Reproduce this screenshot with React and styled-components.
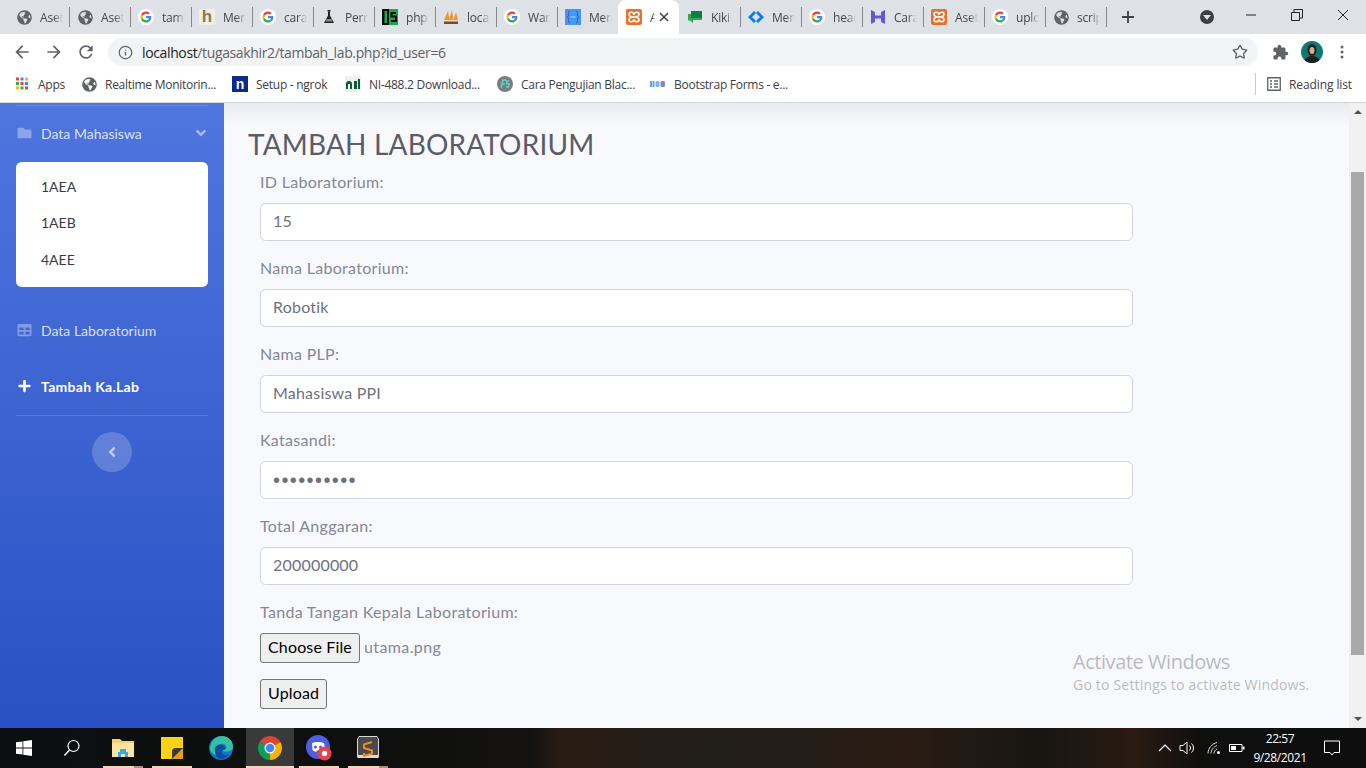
import React from 'react';
import styled, { createGlobalStyle } from 'styled-components';
import { FaFolder, FaTable, FaPlus, FaAngleDown, FaAngleLeft, FaGlobeAmericas } from 'react-icons/fa';
import { MdExtension } from 'react-icons/md';
import { Info, Star } from 'lucide-react';

const GlobalStyle = createGlobalStyle`
  html, body {
    margin: 0;
    height: 768px;
    overflow: hidden;
    font-family: 'Lato', 'Liberation Sans', sans-serif;
  }
  * { box-sizing: border-box; }
`;

const uiFont = `'Open Sans', 'Noto Sans', sans-serif`;

const Screen = styled.div`
  position: relative;
  width: 1366px;
  height: 768px;
  display: flex;
  flex-direction: column;
  overflow: hidden;
`;

/* browser chrome */
const TabStrip = styled.div`
  height: 34px;
  background: #dee1e6;
  display: flex;
  padding-left: 8px;
  align-items: stretch;
  font-family: ${uiFont};
`;

const Tab = styled.div`
  width: 61px;
  flex: none;
  display: flex;
  align-items: center;
  padding-left: 8px;
  position: relative;
  background: ${(p) => (p.$active ? '#fff' : 'transparent')};
  border-radius: ${(p) => (p.$active ? '8px 8px 0 0' : '0')};
  &::after {
    content: '';
    display: ${(p) => (p.$noSep ? 'none' : 'block')};
    position: absolute;
    right: -1px;
    top: 7px;
    height: 20px;
    width: 1px;
    background: #85888c;
  }
`;

const TabTitle = styled.span`
  margin-left: 8px;
  font-size: 12px;
  letter-spacing: -0.2px;
  color: #45474a;
  width: ${(p) => (p.$short ? 5 : 23)}px;
  white-space: nowrap;
  overflow: hidden;
  -webkit-mask-image: linear-gradient(to right, #000 60%, transparent);
  mask-image: linear-gradient(to right, #000 60%, transparent);
`;

const TabClose = styled.span`
  position: absolute;
  right: 8px;
  top: 10px;
  width: 14px;
  height: 14px;
  display: flex;
`;

const StripControls = styled.div`
  display: flex;
  align-items: center;
  flex: 1;
  position: relative;
`;

const NewTab = styled.div`
  margin-left: 14px;
  width: 16px;
  height: 16px;
  display: flex;
`;

const TabSearch = styled.div`
  margin-left: 64px;
  width: 14px;
  height: 14px;
  border-radius: 50%;
  background: #3c4043;
  display: flex;
  align-items: center;
  justify-content: center;
  &::after {
    content: '';
    border-left: 4px solid transparent;
    border-right: 4px solid transparent;
    border-top: 5px solid #dee1e6;
    margin-top: 1px;
  }
`;

const WindowBtns = styled.div`
  display: flex;
  margin-left: auto;
  height: 30px;
  align-self: flex-start;
`;

const WindowBtn = styled.div`
  width: 46px;
  height: 30px;
  display: flex;
  align-items: center;
  justify-content: center;
`;

const Toolbar = styled.div`
  height: 32px;
  background: #fff;
  display: flex;
  align-items: flex-end;
  font-family: ${uiFont};
`;

const NavBtn = styled.div`
  width: ${(p) => p.$w || 32}px;
  height: 28px;
  flex: none;
  display: flex;
  align-items: center;
  justify-content: center;
  margin-left: ${(p) => p.$ml || 0}px;
`;

const Omnibox = styled.div`
  margin-left: 6px;
  width: 1150px;
  height: 28px;
  border-radius: 14px;
  background: #f1f3f4;
  display: flex;
  align-items: center;
  padding: 0 10px;
  color: #5f6368;
`;

const Url = styled.div`
  margin-left: 9px;
  font-size: 14px;
  color: #5f6368;
  flex: 1;
  letter-spacing: -0.37px;
  b { font-weight: 400; color: #202124; }
`;

const Avatar = styled.div`
  width: 22px;
  height: 22px;
  flex: none;
  border-radius: 50%;
  overflow: hidden;
  margin: 0 5px 3px;
`;

const Bookmarks = styled.div`
  height: 37px;
  background: #fff;
  border-bottom: 1px solid #d2d3d5;
  display: flex;
  align-items: flex-start;
  padding: 10px 0 0 14px;
  font-family: ${uiFont};
  font-size: 12px;
  letter-spacing: -0.27px;
  color: #3c4043;
`;

const Bookmark = styled.div`
  width: ${(p) => p.$w}px;
  flex: none;
  height: 16px;
  display: flex;
  align-items: center;
  gap: 8px;
  white-space: nowrap;
`;

const ReadingList = styled.div`
  margin-left: auto;
  width: 111px;
  height: 22px;
  margin-top: -3px;
  border-left: 1px solid #c6c8ca;
  padding-left: 11px;
  display: flex;
  align-items: center;
  gap: 8px;
  white-space: nowrap;
  letter-spacing: -0.1px;
`;

/* page */
const Body = styled.div`
  flex: 1;
  min-height: 0;
  display: flex;
`;

const Sidebar = styled.aside`
  width: 224px;
  flex: none;
  background: linear-gradient(180deg, #4f75df 0%, #2a51c3 100%);
  padding: 2px 16px 0;
  font-size: 14px;
  display: flex;
  flex-direction: column;
`;

const Divider = styled.hr`
  width: 100%;
  margin: 0;
  border: 0;
  border-top: 1px solid rgba(255, 255, 255, 0.15);
`;

const NavItem = styled.div`
  height: 56px;
  padding-bottom: 2px;
  display: flex;
  align-items: center;
  gap: 8px;
  color: ${(p) => (p.$on ? '#fff' : 'rgba(255,255,255,.8)')};
  font-weight: ${(p) => (p.$on ? 700 : 400)};
  letter-spacing: ${(p) => (p.$on ? '0.3px' : '0')};
  svg { flex: none; font-size: 14px; width: 17px; color: ${(p) => (p.$on ? '#fff' : 'rgba(255,255,255,.35)')}; }
`;

const NavArrow = styled.span`
  margin-left: auto;
  display: flex;
  margin-right: -1px;
  svg { font-size: 16px; width: 16px; color: rgba(255, 255, 255, 0.5); }
`;

const SubMenu = styled.div`
  background: #fff;
  border-radius: 5.6px;
  height: 125px;
  padding: 7px 0;
  margin-bottom: 16px;
`;

const SubLink = styled.div`
  height: 36.6px;
  display: flex;
  align-items: center;
  padding: 0 0 2px 25px;
  color: #3a3b45;
  font-size: 14px;
`;

const Toggle = styled.div`
  width: 40px;
  height: 40px;
  border-radius: 50%;
  background: rgba(255, 255, 255, 0.2);
  margin: 16px auto 0;
  display: flex;
  align-items: center;
  justify-content: center;
  color: rgba(255, 255, 255, 0.6);
  font-size: 16px;
`;

const Content = styled.main`
  flex: 1;
  background: #f8f9fc;
  padding: 24px 0 0 24px;
  position: relative;
  color: #858796;
  &::before {
    content: '';
    position: absolute;
    left: 0;
    right: 0;
    top: 0;
    height: 22px;
    background: linear-gradient(180deg, #e9eaed, rgba(248, 249, 252, 0));
  }
`;

const Title = styled.h1`
  margin: 0 0 10px;
  font-size: 28px;
  font-weight: 400;
  line-height: 34px;
  letter-spacing: 0.16px;
  color: #5a5c69;
  position: relative;
`;

const Form = styled.div`
  width: 873px;
  margin-left: 12px;
`;

const Field = styled.div`
  margin-bottom: 16px;
`;

const Label = styled.label`
  display: block;
  font-size: 16px;
  height: 24px;
  line-height: 22px;
  letter-spacing: 0.3px;
  margin-bottom: 8px;
`;

const TextInput = styled.div`
  height: 38px;
  background: #fff;
  border: 1px solid #d1d3e2;
  border-radius: 5.6px;
  padding: 0 12px 3px;
  display: flex;
  align-items: center;
  font-size: 16px;
  letter-spacing: 0.2px;
  color: #6e707e;
`;

const Dots = styled.span`
  letter-spacing: 1.4px;
  font-family: 'Liberation Sans', sans-serif;
  font-size: 20px;
  line-height: 20px;
  padding-top: 3px;
`;

const FileRow = styled.div`
  display: flex;
  align-items: center;
  gap: 4px;
  margin-bottom: 16px;
  font-size: 16px;
`;

const FileName = styled.span`
  letter-spacing: 0.4px;
  padding-bottom: 3px;
`;

const NativeButton = styled.button`
  height: 30px;
  padding: 0 7px 3px;
  background: #efefef;
  border: 1px solid #767676;
  border-radius: 3px;
  font: inherit;
  font-size: 16px;
  letter-spacing: 0.15px;
  color: #000;
`;

const Scrollbar = styled.div`
  width: 17px;
  flex: none;
  background: #f1f1f1;
  display: flex;
  flex-direction: column;
  align-items: center;
  justify-content: space-between;
  position: relative;
  padding: 7px 0;
`;

const ScrollArrow = styled.div`
  border-left: 4px solid transparent;
  border-right: 4px solid transparent;
  ${(p) => (p.$up ? 'border-bottom: 4px solid #505050;' : 'border-top: 4px solid #505050;')}
`;

const ScrollThumb = styled.div`
  position: absolute;
  left: 2px;
  right: 2px;
  top: 69px;
  height: 483px;
  background: #a8a8a8;
`;

const Watermark = styled.div`
  position: absolute;
  left: 1073px;
  top: 649px;
  font-family: ${uiFont};
  color: rgba(120, 122, 130, 0.5);
  font-size: 14px;
  line-height: 22px;
  letter-spacing: 0.2px;
  strong { display: block; font-weight: 400; font-size: 20px; line-height: 25px; letter-spacing: -0.45px; }
`;

/* taskbar */
const Taskbar = styled.footer`
  height: 40px;
  flex: none;
  display: flex;
  align-items: stretch;
  background: linear-gradient(90deg, #0c0f10 0%, #0f0f0e 30%, #141311 39%, #2a1c14 41%, #211e1a 52%, #2a1c14 66%, #181612 76%, #2a1a12 83%, #0f0f0e 88%, #0e0e0e 100%);
  font-family: ${uiFont};
  color: #fff;
`;

const TaskSlot = styled.div`
  width: 48px;
  flex: none;
  display: flex;
  align-items: center;
  justify-content: center;
  position: relative;
  background: ${(p) => (p.$active ? '#3a3a3a' : 'transparent')};
  margin-right: ${(p) => p.$mr || 0}px;
  ${(p) =>
    p.$run &&
    `&::after {
      content: '';
      position: absolute;
      bottom: 0;
      left: ${p.$active ? 0 : 4}px;
      right: ${p.$active ? 0 : 4}px;
      height: 2px;
      background: ${p.$split ? 'linear-gradient(90deg, #f9d3b8 78%, #a8917f 78%)' : '#f9d3b8'};
    }`}
`;

const Tray = styled.div`
  margin-left: auto;
  display: flex;
  align-items: center;
`;

const TrayIcon = styled.div`
  width: ${(p) => p.$w}px;
  margin-right: ${(p) => p.$mr || 0}px;
  display: flex;
  justify-content: center;
`;

const Clock = styled.div`
  width: 62px;
  text-align: center;
  font-size: 12px;
  line-height: 19px;
  margin-left: 2px;
  letter-spacing: -0.4px;
`;

/* favicons and logos */
const Glyph = styled.svg`
  flex: none;
  display: block;
`;

const GoogleIcon = () => (
  <Glyph width="16" height="16" viewBox="0 0 48 48">
    <circle cx="24" cy="24" r="24" fill="#fff" />
    <g transform="translate(7.5 7.5) scale(.69)">
      <path fill="#EA4335" d="M24 9.5c3.5 0 6.7 1.3 9.1 3.5l6.8-6.8C35.8 2.4 30.2 0 24 0 14.6 0 6.5 5.4 2.6 13.2l7.9 6.2C12.4 13.7 17.7 9.5 24 9.5z" />
      <path fill="#4285F4" d="M46.9 24.5c0-1.6-.1-3.1-.4-4.5H24v9h12.9c-.6 3-2.2 5.5-4.7 7.2l7.7 6c4.5-4.2 7-10.3 7-17.7z" />
      <path fill="#FBBC05" d="M10.5 28.6c-.5-1.4-.8-3-.8-4.6s.3-3.2.8-4.6l-7.9-6.2C.9 16.5 0 20.1 0 24s.9 7.5 2.6 10.8l7.9-6.2z" />
      <path fill="#34A853" d="M24 48c6.5 0 11.9-2.1 15.9-5.8l-7.7-6c-2.2 1.4-4.9 2.3-8.2 2.3-6.3 0-11.6-4.2-13.5-9.9l-7.9 6.2C6.5 42.6 14.6 48 24 48z" />
    </g>
  </Glyph>
);

const GlobeGlyph = styled(FaGlobeAmericas)`
  flex: none;
  margin: 0 0.5px;
  color: #5f6368;
  font-size: 15px;
`;

const GlobeIcon = () => <GlobeGlyph />;

const SquareLetter = styled.span`
  width: 16px;
  height: 16px;
  flex: none;
  display: flex;
  align-items: center;
  justify-content: center;
  font-family: 'Liberation Sans', sans-serif;
  font-weight: 700;
  font-size: ${(p) => p.$size || 14}px;
  background: ${(p) => p.$bg};
  color: ${(p) => p.$fg};
`;

const XamppIcon = () => (
  <Glyph width="16" height="16" viewBox="0 0 16 16">
    <rect width="16" height="16" rx="2" fill="#e8702a" />
    <path d="M3 5.5C3 2.5 6.5 2.5 8 5 9.5 2.5 13 2.5 13 5.5 13 7 11.5 7.5 10.5 8 11.5 8.5 13 9 13 10.5 13 13.5 9.5 13.5 8 11 6.5 13.5 3 13.5 3 10.5 3 9 4.5 8.5 5.5 8 4.5 7.5 3 7 3 5.5z" fill="none" stroke="#fff" strokeWidth="1.6" />
    <path d="M6 8h4" stroke="#fff" strokeWidth="1.6" />
  </Glyph>
);

const FlaskIcon = () => (
  <Glyph width="16" height="16" viewBox="0 0 16 16">
    <rect x="6.5" y="1" width="3" height="1.5" fill="#222" />
    <path d="M7 2.5h2v4l4 7.5H3l4-7.5z" fill="#222" />
    <path d="M5.5 10h5l1 2.5h-7z" fill="#8a8a8a" />
  </Glyph>
);

const IsIcon = () => (
  <Glyph width="16" height="16" viewBox="0 0 16 16">
    <rect width="7" height="16" fill="#0c0c0c" />
    <rect x="7" width="9" height="16" fill="#1ea64a" />
    <rect x="2.5" y="2" width="2.5" height="12" fill="#1ea64a" />
    <path d="M14 4H9.5v3.5H14V12H9" fill="none" stroke="#0c0c0c" strokeWidth="2" />
  </Glyph>
);

const PmaIcon = () => (
  <Glyph width="16" height="16" viewBox="0 0 16 16">
    <path d="M1 11 5 2l1.5 9zM6 11l3-10 1.5 10zM10.500 11 13 3l2 8z" fill="#f0962e" />
    <path d="M1 12.5h14V15H1z" fill="#7a4a20" />
  </Glyph>
);

const BracesIcon = () => (
  <Glyph width="16" height="16" viewBox="0 0 16 16">
    <rect width="16" height="16" fill="#3d9cf0" />
    <path d="M5 2C3 2 3.5 4 3.5 6S2 8 2 8s1.5 0 1.5 2S3 14 5 14M11 2c2 0 1.5 2 1.5 4S14 8 14 8s-1.5 0-1.5 2 .5 4-1.5 4" fill="none" stroke="#7a3bb0" />
    <path d="M5.5 8h5" stroke="#a9d3f7" />
  </Glyph>
);

const ChatIcon = () => (
  <Glyph width="16" height="16" viewBox="0 0 16 16">
    <path d="M4 2h11v9H6v3l-3-2.5H1V5h3z" fill="#34a853" />
    <path d="M4 2h11v7H4z" fill="#0b8043" />
  </Glyph>
);

const DiamondIcon = () => (
  <Glyph width="16" height="16" viewBox="0 0 16 16">
    <path d="M6 2 0 8l6 6 2-2-4-4 4-4zM10 2 8 4l4 4-4 4 2 2 6-6z" fill="#0a7cf0" />
  </Glyph>
);

const PurpleHIcon = () => (
  <Glyph width="16" height="16" viewBox="0 0 16 16">
    <path d="M1 1l4 2v3.5h6V3l4-2v14l-4-2V9.5H5V13l-4 2z" fill="#6a55d8" />
  </Glyph>
);

const NgrokIcon = () => <SquareLetter $bg="#0a2a8c" $fg="#fff" $size={14}>n</SquareLetter>;

const HIcon = () => <SquareLetter $bg="#f1eee2" $fg="#8a7a58" $size={17}>h</SquareLetter>;

const NiIcon = () => (
  <Glyph width="16" height="16" viewBox="0 0 16 16">
    <rect width="16" height="16" fill="#eef2ee" />
    <path d="M1 13V8a3 3 0 0 1 6 0v5H5V8H3v5zM9 5h3v8H9z" fill="#0d5c36" />
    <path d="M13 3h2v10h-2z" fill="#0d5c36" />
  </Glyph>
);

const FsIcon = () => (
  <Glyph width="16" height="16" viewBox="0 0 16 16">
    <circle cx="8" cy="8" r="8" fill="#7a7f7c" />
    <path d="M4 12 6 4h3M5 8h3M12 5H9.5l.5 3h2l-.5 3H9" fill="none" stroke="#5fd3c8" strokeWidth="1.5" />
  </Glyph>
);

const MdbIcon = () => (
  <Glyph width="16" height="16" viewBox="0 0 16 16">
    <rect x="0" y="5" width="2" height="6" fill="#59a9e0" />
    <rect x="2.5" y="5" width="2" height="6" fill="#59a9e0" />
    <rect x="5.5" y="5" width="4" height="6" rx="1.5" fill="#7ab7e2" />
    <rect x="10.5" y="5" width="4.5" height="6" rx="1.5" fill="#8e7fd0" />
  </Glyph>
);

const AppsIcon = () => {
  const colors = ['#ea4335', '#4285f4', '#fbbc05', '#34a853', '#ea4335', '#4285f4', '#fbbc05', '#34a853', '#ea4335'];
  return (
    <Glyph width="16" height="16" viewBox="0 0 16 16">
      {colors.map((c, i) => (
        <rect key={i} x={2 + (i % 3) * 4.5} y={1.5 + Math.floor(i / 3) * 4.5} width="3" height="3" fill={c} />
      ))}
    </Glyph>
  );
};

const tabs = [
  [GlobeIcon, 'Aset'],
  [GlobeIcon, 'Aset'],
  [GoogleIcon, 'tamb'],
  [HIcon, 'Men'],
  [GoogleIcon, 'cara'],
  [FlaskIcon, 'Perr'],
  [IsIcon, 'php'],
  [PmaIcon, 'loca'],
  [GoogleIcon, 'War'],
  [BracesIcon, 'Men'],
  [XamppIcon, 'A', true],
  [ChatIcon, 'Kiki'],
  [DiamondIcon, 'Men'],
  [GoogleIcon, 'head'],
  [PurpleHIcon, 'Cara'],
  [XamppIcon, 'Aset'],
  [GoogleIcon, 'uplo'],
  [GlobeIcon, 'scrip'],
];

const bookmarks = [
  [AppsIcon, 'Apps', 67],
  [GlobeIcon, 'Realtime Monitorin...', 151],
  [NgrokIcon, 'Setup - ngrok', 113],
  [NiIcon, 'NI-488.2 Download...', 152],
  [FsIcon, 'Cara Pengujian Blac...', 153],
  [MdbIcon, 'Bootstrap Forms - e...', 200],
];

const fields = [
  ['ID Laboratorium:', '15'],
  ['Nama Laboratorium:', 'Robotik'],
  ['Nama PLP:', 'Mahasiswa PPI'],
  ['Katasandi:', null],
  ['Total Anggaran:', '200000000'],
];

const MaterialPath = ({ d, size = 20, color = '#5f6368' }) => (
  <Glyph width={size} height={size} viewBox="0 0 24 24">
    <path d={d} fill={color} />
  </Glyph>
);

const App = () => (
  <Screen>
    <GlobalStyle />
    <TabStrip>
      {tabs.map(([Icon, title, active], i) => (
        <Tab key={i} $active={active} $noSep={active || i === 9}>
          <Icon />
          <TabTitle $short={active}>{title}</TabTitle>
          {active && (
            <TabClose>
              <Glyph width="14" height="14" viewBox="0 0 14 14">
                <path d="M3 3l8 8M11 3l-8 8" stroke="#3c4043" strokeWidth="1.5" />
              </Glyph>
            </TabClose>
          )}
        </Tab>
      ))}
      <StripControls>
        <NewTab>
          <Glyph width="16" height="16" viewBox="0 0 16 16">
            <path d="M8 2v12M2 8h12" stroke="#3c4043" strokeWidth="1.8" />
          </Glyph>
        </NewTab>
        <TabSearch />
        <WindowBtns>
          <WindowBtn>
            <Glyph width="12" height="12" viewBox="0 0 12 12"><path d="M1 6h10" stroke="#222" /></Glyph>
          </WindowBtn>
          <WindowBtn>
            <Glyph width="12" height="12" viewBox="0 0 12 12">
              <path d="M.5 3.5h8v8h-8zM3 3.5V.5h8.5V9h-3" fill="none" stroke="#222" />
            </Glyph>
          </WindowBtn>
          <WindowBtn>
            <Glyph width="12" height="12" viewBox="0 0 12 12"><path d="M1 1l10 10M11 1L1 11" stroke="#222" /></Glyph>
          </WindowBtn>
        </WindowBtns>
      </StripControls>
    </TabStrip>

    <Toolbar>
      <NavBtn $ml={6}><MaterialPath d="M20 11H7.83l5.59-5.59L12 4l-8 8 8 8 1.41-1.41L7.83 13H20v-2z" /></NavBtn>
      <NavBtn><MaterialPath d="M4 11h12.17l-5.59-5.59L12 4l8 8-8 8-1.41-1.41L16.17 13H4v-2z" /></NavBtn>
      <NavBtn><MaterialPath d="M17.65 6.35A7.96 7.96 0 0 0 12 4c-4.42 0-7.99 3.58-7.99 8s3.57 8 7.99 8c3.73 0 6.84-2.55 7.73-6h-2.08A5.99 5.99 0 0 1 12 18c-3.31 0-6-2.69-6-6s2.69-6 6-6c1.66 0 3.14.69 4.22 1.78L13 11h7V4l-2.35 2.35z" /></NavBtn>
      <Omnibox>
        <Info size={15} strokeWidth={2} />
        <Url><b>localhost</b>/tugasakhir2/tambah_lab.php?id_user=6</Url>
        <Star size={16} strokeWidth={2} />
      </Omnibox>
      <NavBtn $ml={6}><MdExtension size={17} color="#5f6368" /></NavBtn>
      <Avatar>
        <Glyph width="22" height="22" viewBox="0 0 22 22">
          <rect width="22" height="22" fill="#0c7a72" />
          <path d="M3 22c0-5 4-7 8-7s8 2 8 7z" fill="#1d1d1f" />
          <ellipse cx="11" cy="9" rx="4.5" ry="6" fill="#1d1d1f" />
          <ellipse cx="11" cy="9.5" rx="2.5" ry="3.5" fill="#e3a97f" />
        </Glyph>
      </Avatar>
      <NavBtn $w={28}>
        <Glyph width="16" height="16" viewBox="0 0 16 16">
          <circle cx="8" cy="3" r="1.5" fill="#5f6368" />
          <circle cx="8" cy="8" r="1.5" fill="#5f6368" />
          <circle cx="8" cy="13" r="1.5" fill="#5f6368" />
        </Glyph>
      </NavBtn>
    </Toolbar>

    <Bookmarks>
      {bookmarks.map(([Icon, label, w]) => (
        <Bookmark key={label} $w={w}>
          <Icon />
          <span>{label}</span>
        </Bookmark>
      ))}
      <ReadingList>
        <Glyph width="14" height="14" viewBox="0 0 14 14">
          <path d="M.75.75h12.5v12.5H.75zM3 4h2M7 4h4M3 7h2M7 7h4M3 10h2M7 10h4" fill="none" stroke="#5f6368" strokeWidth="1.3" />
        </Glyph>
        <span>Reading list</span>
      </ReadingList>
    </Bookmarks>

    <Body>
      <Sidebar>
        <Divider />
        <NavItem>
          <FaFolder />
          <span>Data Mahasiswa</span>
          <NavArrow><FaAngleDown /></NavArrow>
        </NavItem>
        <SubMenu>
          <SubLink>1AEA</SubLink>
          <SubLink>1AEB</SubLink>
          <SubLink>4AEE</SubLink>
        </SubMenu>
        <NavItem><FaTable /><span>Data Laboratorium</span></NavItem>
        <NavItem $on><FaPlus /><span>Tambah Ka.Lab</span></NavItem>
        <Divider />
        <Toggle><FaAngleLeft /></Toggle>
      </Sidebar>

      <Content>
        <Title>TAMBAH LABORATORIUM</Title>
        <Form>
          {fields.map(([label, value]) => (
            <Field key={label}>
              <Label>{label}</Label>
              <TextInput>{value === null ? <Dots>••••••••••</Dots> : value}</TextInput>
            </Field>
          ))}
          <Label>Tanda Tangan Kepala Laboratorium:</Label>
          <FileRow>
            <NativeButton type="button">Choose File</NativeButton>
            <FileName>utama.png</FileName>
          </FileRow>
          <NativeButton type="button">Upload</NativeButton>
        </Form>
      </Content>

      <Scrollbar>
        <ScrollArrow $up />
        <ScrollThumb />
        <ScrollArrow />
      </Scrollbar>
    </Body>

    <Taskbar>
      <TaskSlot>
        <Glyph width="16" height="16" viewBox="0 0 16 16">
          <path d="M0 2.3 6.5 1.4v6.2H0zM7.3 1.3 16 0v7.6H7.3zM0 8.4h6.5v6.2L0 13.7zM7.3 8.4H16V16l-8.7-1.3z" fill="#fff" />
        </Glyph>
      </TaskSlot>
      <TaskSlot $mr={3}>
        <Glyph width="18" height="18" viewBox="0 0 18 18">
          <circle cx="10.5" cy="7" r="5.5" fill="none" stroke="#fff" strokeWidth="1.2" />
          <path d="M6.5 11 1.5 16.5" stroke="#fff" strokeWidth="1.4" />
        </Glyph>
      </TaskSlot>
      <TaskSlot $run $split $mr={1}>
        <Glyph width="24" height="24" viewBox="0 0 24 24">
          <path d="M1 3h8l2 2h12v16H1z" fill="#f5d06f" />
          <path d="M1 7h22v14H1z" fill="#fbe5a0" />
          <path d="M7 21v-5h2v-3h6v3h2v5h-3v-3h-4v3z" fill="#3aa7e6" />
        </Glyph>
      </TaskSlot>
      <TaskSlot $run $mr={1}>
        <Glyph width="22" height="22" viewBox="0 0 22 22">
          <path d="M0 0h22v22H0z" fill="#fcd116" />
          <path d="M11 22 22 11v11z" fill="#e3a008" />
          <path d="M11 22v-7.5a3.5 3.5 0 0 1 3.5-3.5H22z" fill="#3b3a36" />
        </Glyph>
      </TaskSlot>
      <TaskSlot $mr={1}>
        <Glyph width="24" height="24" viewBox="0 0 24 24">
          <circle cx="12" cy="12" r="12" fill="#1277c9" />
          <path d="M1 12C2 4 8 0 13 0c6 0 11 4 11 11 0 3-3 4.5-7 4.5-2 0-3-.5-3-1.5 3 0 4-2 3-4-1.5-3-8-3-10 1-1 2-.5 5 1 8C4 18.5 1 16 1 12z" fill="#35c1a0" />
          <path d="M6 12c1-4 8-4 10-1 .8 1.5 0 3-2 3-2.5 1-1 5 3 5 1 0 2-.2 3-.8C18 21.5 15 23 12 23c-4 0-7-6-6-11z" fill="#0c4f9e" />
        </Glyph>
      </TaskSlot>
      <TaskSlot $run $active $mr={1}>
        <Glyph width="24" height="24" viewBox="0 0 24 24">
          <path d="M12 12 1.61 6A12 12 0 0 1 22.39 6z" fill="#db4437" />
          <path d="M12 12 22.39 6A12 12 0 0 1 12 24z" fill="#f4b400" />
          <path d="M12 12 12 24A12 12 0 0 1 1.61 6z" fill="#0f9d58" />
          <circle cx="12" cy="12" r="5.5" fill="#fff" />
          <circle cx="12" cy="12" r="4.3" fill="#4285f4" />
        </Glyph>
      </TaskSlot>
      <TaskSlot $run $mr={1}>
        <Glyph width="26" height="26" viewBox="0 0 26 26">
          <circle cx="12" cy="12" r="12" fill="#4b5fe0" />
          <path d="M6 8c3-1.5 9-1.5 12 0l1.5 7c-1 1-2.5 1.5-3.5 2l-1-1.5h-4L10 17c-1-.5-2.5-1-3.5-2z" fill="#fff" />
          <circle cx="9.5" cy="12" r="1.5" fill="#4b5fe0" />
          <circle cx="14.5" cy="12" r="1.5" fill="#4b5fe0" />
          <circle cx="18.5" cy="18.5" r="7" fill="#e8424a" />
          <circle cx="18.5" cy="18.5" r="2.7" fill="#fff" />
        </Glyph>
      </TaskSlot>
      <TaskSlot $run $split>
        <Glyph width="24" height="24" viewBox="0 0 24 24">
          <path d="M3 0h18l2 3v18l-1 1H2l-1-1V3z" fill="#d8d8d8" />
          <path d="M3 1h18l1 2v16H2V3z" fill="#4a4a4a" />
          <path d="M16 6 8 8.5V12l8 2.5v3L8 20v-3" fill="none" stroke="#f08a24" strokeWidth="2" />
        </Glyph>
      </TaskSlot>
      <Tray>
        <TrayIcon $w={20}>
          <Glyph width="14" height="10" viewBox="0 0 14 10"><path d="M1 8 7 2l6 6" fill="none" stroke="#fff" strokeWidth="1.2" /></Glyph>
        </TrayIcon>
        <TrayIcon $w={26}>
          <Glyph width="18" height="16" viewBox="0 0 18 16">
            <path d="M1 5.5h3L8 2v12l-4-3.5H1zM10.5 5.5a3.5 3.5 0 0 1 0 5M12.500 3.500a6 6 0 0 1 0 9" fill="none" stroke="#fff" />
          </Glyph>
        </TrayIcon>
        <TrayIcon $w={26}>
          <Glyph width="14" height="14" viewBox="0 0 14 14">
            <path d="M1 12.5C1 7 5 3 10 1.5M4 12.5C4 9 6.5 6 10 4.500M7 12.5c0-2 1-3.5 3-4.5" fill="none" stroke="#d8d8d8" />
            <circle cx="11.5" cy="11.5" r="1.5" fill="#fff" />
          </Glyph>
        </TrayIcon>
        <TrayIcon $w={20}>
          <Glyph width="16" height="10" viewBox="0 0 16 10">
            <path d="M.5 1.5H13v7H.5z" fill="none" stroke="#fff" />
            <rect x="2" y="3" width="5" height="4" fill="#fff" />
            <rect x="13.5" y="3.5" width="2" height="3" fill="#fff" />
          </Glyph>
        </TrayIcon>
        <Clock>22:57<br />9/28/2021</Clock>
        <TrayIcon $w={42} $mr={13}>
          <Glyph width="16" height="16" viewBox="0 0 16 16">
            <path d="M.5 1h15v11.5H10L8 15l-2-2.5H.5z" fill="none" stroke="#fff" />
          </Glyph>
        </TrayIcon>
      </Tray>
    </Taskbar>

    <Watermark>
      <strong>Activate Windows</strong>
      Go to Settings to activate Windows.
    </Watermark>
  </Screen>
);

export default App;
